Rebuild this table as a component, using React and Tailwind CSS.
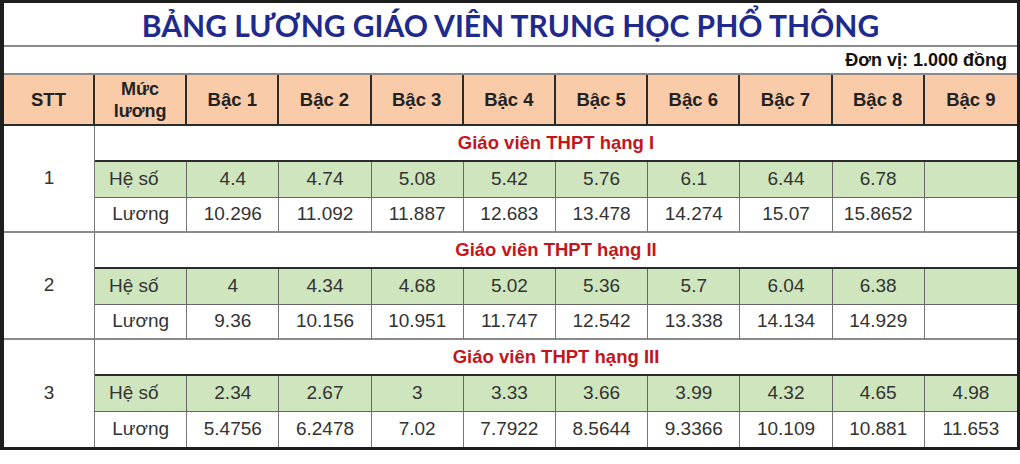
const groups = [
  {
    stt: 1,
    title: 'Giáo viên THPT hạng I',
    heSo: ['4.4', '4.74', '5.08', '5.42', '5.76', '6.1', '6.44', '6.78', ''],
    luong: ['10.296', '11.092', '11.887', '12.683', '13.478', '14.274', '15.07', '15.8652', ''],
  },
  {
    stt: 2,
    title: 'Giáo viên THPT hạng II',
    heSo: ['4', '4.34', '4.68', '5.02', '5.36', '5.7', '6.04', '6.38', ''],
    luong: ['9.36', '10.156', '10.951', '11.747', '12.542', '13.338', '14.134', '14.929', ''],
  },
  {
    stt: 3,
    title: 'Giáo viên THPT hạng III',
    heSo: ['2.34', '2.67', '3', '3.33', '3.66', '3.99', '4.32', '4.65', '4.98'],
    luong: ['5.4756', '6.2478', '7.02', '7.7922', '8.5644', '9.3366', '10.109', '10.881', '11.653'],
  },
];

const bacs = ['Bậc 1', 'Bậc 2', 'Bậc 3', 'Bậc 4', 'Bậc 5', 'Bậc 6', 'Bậc 7', 'Bậc 8', 'Bậc 9'];

function Group({ g, last }) {
  const bottom = last ? '' : 'border-b-2 border-b-[#8a8a8a]';
  return (
    <>
      <div className={`row-span-3 flex items-center justify-center border-r border-[#777] text-[19px] text-[#333] ${bottom}`}>
        {g.stt}
      </div>
      <div className="col-span-10 flex h-[36px] items-center justify-center border-b-2 border-[#2b2b2b] text-[18.5px] font-bold text-[#c3161c]">
        {g.title}
      </div>
      <div className="flex h-[36px] items-center border-r border-b border-[#666] bg-[#cee5bd] pl-[14px] text-[19px] text-[#333]">
        Hệ số
      </div>
      {g.heSo.map((v, i) => (
        <div
          key={'h' + i}
          className={`flex h-[36px] items-center justify-center border-b border-[#666] bg-[#cee5bd] text-[19px] text-[#333] ${i < 8 ? 'border-r' : ''}`}
        >
          {v}
        </div>
      ))}
      <div className={`flex h-[35px] items-center justify-center border-r border-[#777] text-[19px] text-[#333] ${bottom}`}>
        Lương
      </div>
      {g.luong.map((v, i) => (
        <div
          key={'l' + i}
          className={`flex h-[35px] items-center justify-center border-[#777] text-[19px] text-[#333] ${i < 8 ? 'border-r' : ''} ${bottom}`}
        >
          {v}
        </div>
      ))}
    </>
  );
}

export default function App() {
  return (
    <div className="h-[464px] w-[1020px] bg-white" style={{ fontFamily: '"Liberation Sans", Arial, sans-serif' }}>
      <div className="w-[1020px] border-t-[3px] border-r-[3px] border-b-[3px] border-l-4 border-[#1e1e1e]">
        <div
          className="flex h-[44px] items-center justify-center border-b-2 border-[#8a8a8a] pt-[2px] text-[30px] font-bold text-[#1f2a8e]"
          style={{ fontFamily: 'Lato, "Noto Sans", sans-serif' }}
        >
          BẢNG LƯƠNG GIÁO VIÊN TRUNG HỌC PHỔ THÔNG
        </div>
        <div className="flex h-[28px] items-center justify-end border-b-2 border-[#8a8a8a] pr-[10px] text-[18px] font-bold text-[#111]">
          Đơn vị: 1.000 đồng
        </div>
        <div className="grid grid-cols-[91px_repeat(10,minmax(0,1fr))]">
          <div className="flex h-[51px] items-center justify-center border-r-2 border-b-2 border-[#2b2b2b] bg-[#f9cba9] text-[18.5px] font-bold text-[#222]">
            STT
          </div>
          <div className="flex h-[51px] flex-col items-center justify-center border-r-2 border-b-2 border-[#2b2b2b] bg-[#f9cba9] text-[18px] leading-[22px] font-bold text-[#222]">
            <span>Mức</span>
            <span>lương</span>
          </div>
          {bacs.map((b, i) => (
            <div
              key={b}
              className={`flex h-[51px] items-center justify-center border-b-2 border-[#2b2b2b] bg-[#f9cba9] text-[18.5px] font-bold text-[#222] ${i < 8 ? 'border-r-2' : ''}`}
            >
              {b}
            </div>
          ))}
          {groups.map((g, i) => (
            <Group key={g.stt} g={g} last={i === groups.length - 1} />
          ))}
        </div>
      </div>
    </div>
  );
}
